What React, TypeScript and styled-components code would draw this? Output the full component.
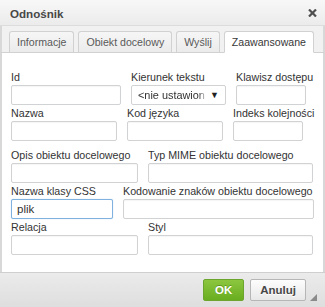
import React from "react";
import styled, { createGlobalStyle } from "styled-components";

const Global = createGlobalStyle`
  html, body { margin: 0; padding: 0; background: #fff; }
  body { font-family: "Liberation Sans", Arial, sans-serif; }
  * { box-sizing: border-box; }
`;

const Dialog = styled.div`
  width: 325px;
  height: 307px;
  display: flex;
  flex-direction: column;
  background: #f2f2f2;
  overflow: hidden;
`;

const TitleBar = styled.div`
  height: 26px;
  display: flex;
  align-items: center;
  justify-content: space-between;
  padding: 0 8px 0 10px;
  background: linear-gradient(#f8f8f8, #ebebeb);
  border-bottom: 1px solid #dcdcdc;
`;

const Title = styled.div`
  font-size: 11.6px;
  font-weight: bold;
  color: #474747;
  padding-top: 1px;
`;

const Close = styled.div`
  width: 9px;
  height: 8px;
  display: flex;
`;

const TabStrip = styled.div`
  height: 26px;
  display: flex;
  align-items: flex-end;
  gap: 4px;
  padding: 0 0 0 7px;
  background: #f1f1f1;
  border-left: 2px solid #d8d8d8;
  border-right: 2px solid #d8d8d8;
`;

const Tab = styled.div<{ $active?: boolean }>`
  flex-shrink: 0;
  white-space: nowrap;
  padding: 0 7px;
  display: flex;
  align-items: center;
  font-size: 10.6px;
  color: ${(p) => (p.$active ? "#383838" : "#595959")};
  background: ${(p) => (p.$active ? "#fff" : "linear-gradient(#f6f6f6, #ebebeb)")};
  border: 1px solid #d1d1d1;
  border-bottom: ${(p) => (p.$active ? "1px solid #fff" : "none")};
  border-radius: 3px 3px 0 0;
  margin-bottom: ${(p) => (p.$active ? "-1px" : "0")};
  height: ${(p) => (p.$active ? "22px" : "21px")};
  position: relative;
`;

const Body = styled.div`
  height: 220px;
  background: #fff;
  border-left: 2px solid #d8d8d8;
  border-right: 2px solid #d8d8d8;
  border-top: 1px solid #d1d1d1;
  padding: 17px 0 0 9px;
  display: flex;
  flex-direction: column;
`;

const Group = styled.div<{ $top?: number }>`
  display: flex;
  flex-direction: column;
  gap: 1px;
  margin-top: ${(p) => p.$top ?? 0}px;
`;

const Row = styled.div`
  display: flex;
  gap: 10px;
`;

const Field = styled.div<{ $w: number }>`
  width: ${(p) => p.$w}px;
  display: flex;
  flex-direction: column;
`;

const Label = styled.label`
  font-size: 10.7px;
  line-height: 14px;
  height: 15px;
  color: #333;
  white-space: nowrap;
`;

const Input = styled.input<{ $focus?: boolean }>`
  width: 100%;
  height: 20px;
  margin: 0;
  padding: 0 5px;
  font-family: "Liberation Sans", Arial, sans-serif;
  font-size: 11.5px;
  color: #333;
  background: #fff;
  border: 1px solid ${(p) => (p.$focus ? "#7fb2de" : "#d0d2d4")};
  border-radius: 2px;
  box-shadow: ${(p) =>
    p.$focus ? "0 0 1px rgba(80,150,220,0.5)" : "inset 0 1px 1px rgba(0,0,0,0.04)"};
  outline: none;
`;

const Select = styled.div`
  width: 100%;
  height: 20px;
  display: flex;
  align-items: center;
  justify-content: space-between;
  padding: 0 6px 0 6px;
  border: 1px solid #d0d2d4;
  border-radius: 2px;
  background: #fff;
  font-size: 10.9px;
  color: #333;
`;

const SelectText = styled.span`
  white-space: nowrap;
  -webkit-mask-image: linear-gradient(to right, #000 90%, rgba(0,0,0,0.3));
  mask-image: linear-gradient(to right, #000 90%, rgba(0,0,0,0.3));
`;

const Arrow = styled.span`
  font-size: 9px;
  color: #222;
`;

const Footer = styled.div`
  flex: 1;
  display: flex;
  align-items: flex-start;
  justify-content: flex-end;
  gap: 4px;
  padding: 6px 8px 0 0;
  background: linear-gradient(#ebebeb, #dedede);
  border-top: 1px solid #cfcfcf;
`;

const Buttons = styled.div`
  display: flex;
  gap: 6px;
`;

const Button = styled.div<{ $ok?: boolean }>`
  height: 22px;
  display: flex;
  align-items: center;
  justify-content: center;
  font-size: 11.5px;
  font-weight: bold;
  border-radius: 2px;
  padding: 0 ${(p) => (p.$ok ? "11px" : "9px")};
  color: ${(p) => (p.$ok ? "#fff" : "#474747")};
  background: ${(p) =>
    p.$ok ? "linear-gradient(#8cc63f, #69ad20)" : "linear-gradient(#fdfdfd, #e8e8e8)"};
  border: 1px solid ${(p) => (p.$ok ? "#6ba52e" : "#b6b6b6")};
  text-shadow: ${(p) => (p.$ok ? "0 -1px 0 rgba(60,110,10,0.5)" : "0 1px 0 #fff")};
`;

const Grip = styled.div`
  align-self: flex-end;
  width: 7px;
  height: 7px;
  margin-bottom: 6px;
  display: flex;
`;

export default function App() {
  return (
    <>
      <Global />
      <Dialog>
        <TitleBar>
          <Title>Odnośnik</Title>
          <Close>
            <svg width="9" height="8" viewBox="0 0 9 8">
              <path d="M1 0.5 L8 7.5 M8 0.5 L1 7.5" stroke="#4f4f4f" strokeWidth="2.2" />
            </svg>
          </Close>
        </TitleBar>
        <TabStrip>
          <Tab>Informacje</Tab>
          <Tab>Obiekt docelowy</Tab>
          <Tab>Wyślij</Tab>
          <Tab $active>Zaawansowane</Tab>
        </TabStrip>
        <Body>
          <Group>
            <Row>
              <Field $w={110}>
                <Label>Id</Label>
                <Input />
              </Field>
              <Field $w={95}>
                <Label>Kierunek tekstu</Label>
                <Select>
                  <SelectText>&lt;nie ustawion</SelectText>
                  <Arrow>▼</Arrow>
                </Select>
              </Field>
              <Field $w={70}>
                <Label>Klawisz dostępu</Label>
                <Input />
              </Field>
            </Row>
            <Row>
              <Field $w={106}>
                <Label>Nazwa</Label>
                <Input />
              </Field>
              <Field $w={96}>
                <Label>Kod języka</Label>
                <Input />
              </Field>
              <Field $w={70}>
                <Label>Indeks kolejności</Label>
                <Input />
              </Field>
            </Row>
          </Group>
          <Group $top={7}>
            <Row>
              <Field $w={127}>
                <Label>Opis obiektu docelowego</Label>
                <Input />
              </Field>
              <Field $w={165}>
                <Label>Typ MIME obiektu docelowego</Label>
                <Input />
              </Field>
            </Row>
            <Row>
              <Field $w={102}>
                <Label>Nazwa klasy CSS</Label>
                <Input $focus defaultValue="plik" />
              </Field>
              <Field $w={191}>
                <Label>Kodowanie znaków obiektu docelowego</Label>
                <Input />
              </Field>
            </Row>
            <Row>
              <Field $w={127}>
                <Label>Relacja</Label>
                <Input />
              </Field>
              <Field $w={165}>
                <Label>Styl</Label>
                <Input />
              </Field>
            </Row>
          </Group>
        </Body>
        <Footer>
          <Buttons>
            <Button $ok>OK</Button>
            <Button>Anuluj</Button>
          </Buttons>
          <Grip>
            <svg width="7" height="7" viewBox="0 0 7 7">
              <path d="M7 0 L7 7 L0 7 Z" fill="#8a8a8a" />
            </svg>
          </Grip>
        </Footer>
      </Dialog>
    </>
  );
}
